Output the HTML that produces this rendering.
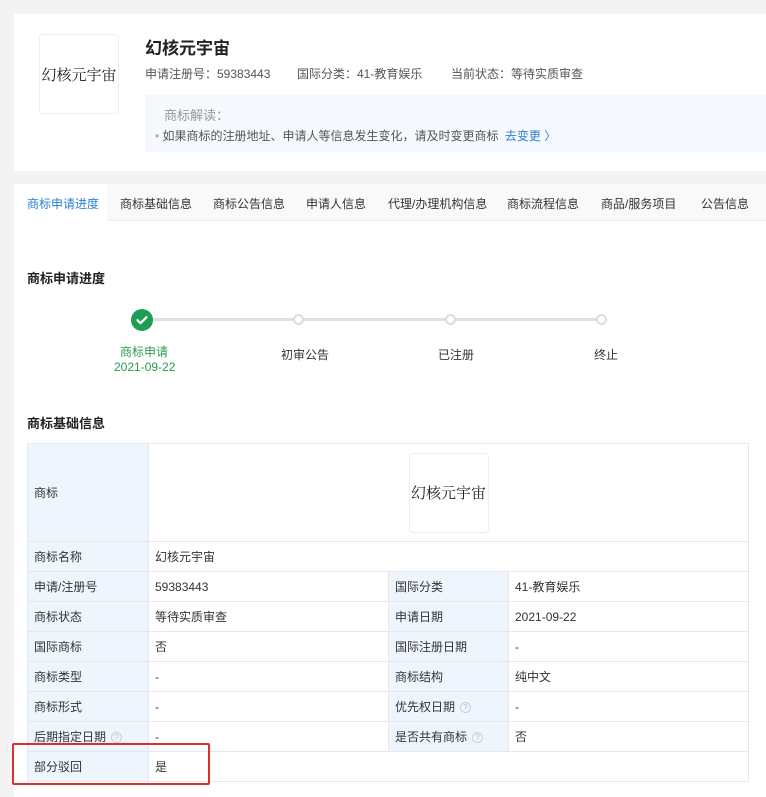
<!DOCTYPE html>
<html><head><meta charset="utf-8"><style>
*{margin:0;padding:0;box-sizing:border-box}
body{width:766px;height:797px;background:#f3f3f3;font-family:"Liberation Sans","Noto Sans CJK SC",sans-serif;font-size:12px;color:#333;position:relative;overflow:hidden}
.a{position:absolute;white-space:nowrap}
.logo{border:1px solid #eee;border-radius:4px;background:#fff;display:flex;align-items:center;justify-content:center;font-family:"Noto Serif CJK SC","Liberation Serif",serif;font-size:15px;color:#222}
table{position:absolute;left:27px;top:443px;width:722px;border-collapse:collapse;font-size:12px}
td{border:1px solid #e8e8e8;height:30px;padding:0 6px;color:#333}
td.l{background:#eef5fd;width:121px}
td.v{width:240px}
td.l2{background:#eef5fd;width:120px}
.q{display:inline-block;width:11px;height:11px;border:1px solid #c8d0d8;border-radius:50%;font-size:8px;line-height:9px;text-align:center;color:#b8c0c8;margin-left:5px;vertical-align:middle}
.dot{position:absolute;width:11px;height:11px;border:2px solid #ddd;border-radius:50%;background:#fff;top:314px}
</style></head><body>
<div class="a" style="left:14px;top:14px;width:752px;height:157px;background:#fff"></div>
<div class="a logo" style="left:39px;top:34px;width:80px;height:80px">幻核元宇宙</div>
<div class="a" style="left:145px;top:34px;font-size:17px;font-weight:bold;color:#222">幻核元宇宙</div>
<div class="a" style="left:145px;top:65px;color:#555">申请注册号：59383443</div>
<div class="a" style="left:297px;top:65px;color:#555">国际分类：41-教育娱乐</div>
<div class="a" style="left:451px;top:65px;color:#555">当前状态：等待实质审查</div>
<div class="a" style="left:145px;top:95px;width:621px;height:57px;background:#f5f9fd"></div>
<div class="a" style="left:164px;top:105px;font-size:13px;color:#999">商标解读：</div>
<div class="a" style="left:155px;top:127px;color:#555"><span style="color:#aaa">•</span> 如果商标的注册地址、申请人等信息发生变化，请及时变更商标 <span style="color:#2a7fd4;margin-left:3px">去变更 〉</span></div>

<div class="a" style="left:14px;top:184px;width:752px;height:613px;background:#fff"></div>
<div class="a" style="left:14px;top:184px;width:752px;height:37px;background:#f9f9f9;border-bottom:1px solid #eee"></div>
<div class="a" style="left:14px;top:184px;width:93px;height:38px;background:#fff"></div>
<div class="a" style="left:27px;top:195px;color:#2a7fd4">商标申请进度</div>
<div class="a" style="left:120px;top:195px">商标基础信息</div>
<div class="a" style="left:213px;top:195px">商标公告信息</div>
<div class="a" style="left:306px;top:195px">申请人信息</div>
<div class="a" style="left:388px;top:195px">代理/办理机构信息</div>
<div class="a" style="left:507px;top:195px">商标流程信息</div>
<div class="a" style="left:601px;top:195px">商品/服务项目</div>
<div class="a" style="left:701px;top:195px">公告信息</div>

<div class="a" style="left:27px;top:268px;font-size:13px;font-weight:bold;color:#222">商标申请进度</div>
<div class="a" style="left:150px;top:318px;width:452px;height:3px;background:#e0e0e0"></div>
<div class="a" style="left:131px;top:309px;width:22px;height:22px;border-radius:50%;background:#1f9d55"><svg width="22" height="22" viewBox="0 0 22 22"><path d="M6.5 11.2l3 3 6-6" stroke="#fff" stroke-width="2.2" fill="none" stroke-linecap="round" stroke-linejoin="round"/></svg></div>
<div class="dot" style="left:293px"></div>
<div class="dot" style="left:445px"></div>
<div class="dot" style="left:596px"></div>
<div class="a" style="left:120px;top:343px;color:#2a9a50">商标申请</div>
<div class="a" style="left:114px;top:360px;color:#2a9a50">2021-09-22</div>
<div class="a" style="left:281px;top:346px">初审公告</div>
<div class="a" style="left:438px;top:346px">已注册</div>
<div class="a" style="left:594px;top:346px">终止</div>

<div class="a" style="left:27px;top:413px;font-size:13px;font-weight:bold;color:#222">商标基础信息</div>
<table>
<tr><td class="l" style="height:98px">商标</td><td colspan="3" style="text-align:center"><div class="logo" style="width:80px;height:80px;margin:0 auto;position:relative;left:0px">幻核元宇宙</div></td></tr>
<tr><td class="l">商标名称</td><td colspan="3">幻核元宇宙</td></tr>
<tr><td class="l">申请/注册号</td><td class="v">59383443</td><td class="l2">国际分类</td><td>41-教育娱乐</td></tr>
<tr><td class="l">商标状态</td><td class="v">等待实质审查</td><td class="l2">申请日期</td><td>2021-09-22</td></tr>
<tr><td class="l">国际商标</td><td class="v">否</td><td class="l2">国际注册日期</td><td>-</td></tr>
<tr><td class="l">商标类型</td><td class="v">-</td><td class="l2">商标结构</td><td>纯中文</td></tr>
<tr><td class="l">商标形式</td><td class="v">-</td><td class="l2">优先权日期<span class="q">?</span></td><td>-</td></tr>
<tr><td class="l">后期指定日期<span class="q">?</span></td><td class="v">-</td><td class="l2">是否共有商标<span class="q">?</span></td><td>否</td></tr>
<tr><td class="l">部分驳回</td><td colspan="3">是</td></tr>
</table>
<div class="a" style="left:12px;top:743px;width:198px;height:42px;border:2px solid #d9302c;border-radius:2px"></div>
</body></html>
